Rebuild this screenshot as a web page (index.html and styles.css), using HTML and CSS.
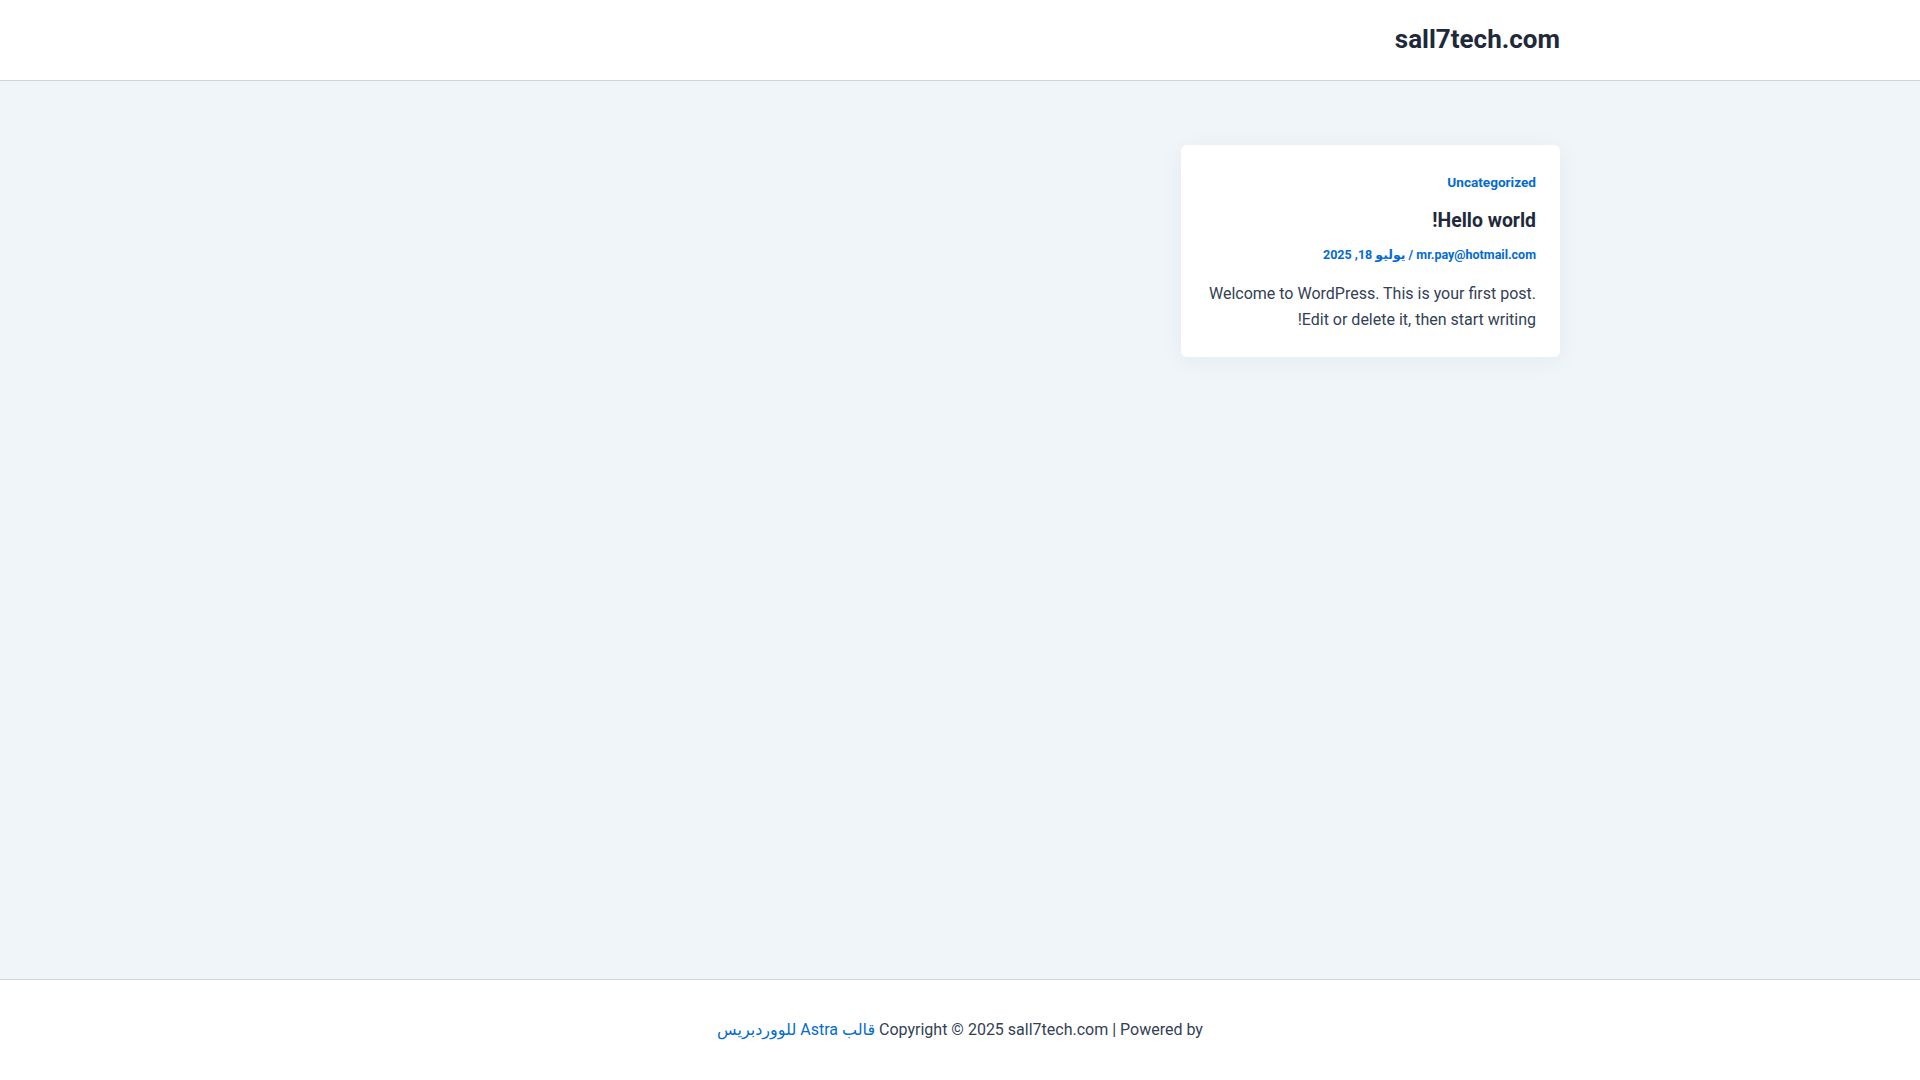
FILE: index.html
```html
<!DOCTYPE html>
<html lang="ar" dir="rtl">
<head>
<meta charset="utf-8">
<title>sall7tech.com</title>
<link rel="stylesheet" href="styles.css">
</head>
<body>
<header class="site-header">
  <div class="container header-inner">
    <a class="site-title" href="#">sall7tech.com</a>
  </div>
</header>
<main class="site-main">
  <div class="container posts-grid">
    <article class="post-card">
      <div class="post-cat"><a href="#">Uncategorized</a></div>
      <h2 class="post-title"><a href="#">Hello world!</a></h2>
      <div class="post-meta"><a href="#">mr.pay@hotmail.com</a> / يوليو 18, 2025</div>
      <p class="post-excerpt">Welcome to WordPress. This is your first post. Edit or delete it, then start writing!</p>
    </article>
  </div>
</main>
<footer class="site-footer">
  <div class="footer-inner">Copyright © 2025 sall7tech.com | Powered by <a href="#">قالب Astra للووردبريس</a></div>
</footer>
</body>
</html>
```
FILE: styles.css
```css
* { box-sizing: border-box; }
html, body { height: 100%; }
body {
  margin: 0;
  font-family: Roboto, "Noto Sans", "DejaVu Sans", sans-serif;
  color: #334155;
  background: #f0f5fa;
  display: flex;
  flex-direction: column;
  min-height: 100vh;
}
a { text-decoration: none; }
.container {
  width: 1200px;
  margin: 0 auto;
}
.site-header {
  background: #ffffff;
  border-bottom: 1px solid #d1d5db;
  height: 81px;
}
.header-inner {
  height: 80px;
  display: flex;
  align-items: center;
}
.site-title {
  font-size: 26px;
  font-weight: 700;
  line-height: 1.2;
  color: #1e293b;
}
.site-main {
  flex: 1;
  padding-top: 64px;
}
.posts-grid {
  display: grid;
  grid-template-columns: repeat(3, 1fr);
  gap: 32px;
  align-items: start;
}
.post-card {
  background: #ffffff;
  border-radius: 6px;
  padding: 27px 24px 23px;
  box-shadow: 0 4px 24px rgba(30, 41, 59, 0.05);
}
.post-cat {
  font-size: 13.6px;
  font-weight: 700;
  line-height: 20px;
}
.post-cat a, .post-meta, .post-meta a { color: #046bd2; }
.post-title {
  margin: 16px 0 0;
  font-size: 19.4px;
  font-weight: 700;
  line-height: 26px;
}
.post-title a { color: #1e293b; }
.post-meta {
  margin-top: 10.5px;
  font-size: 12.5px;
  font-weight: 700;
  line-height: 20px;
}
.post-excerpt {
  margin: 16px 0 0;
  font-size: 16px;
  line-height: 26.5px;
  color: #334155;
}
.site-footer {
  background: #ffffff;
  border-top: 1px solid #d1d5db;
  height: 101px;
  display: flex;
  align-items: center;
  justify-content: center;
}
.footer-inner {
  font-size: 16px;
  line-height: 26.5px;
  color: #334155;
  text-align: center;
}
.footer-inner a { color: #046bd2; }
```
